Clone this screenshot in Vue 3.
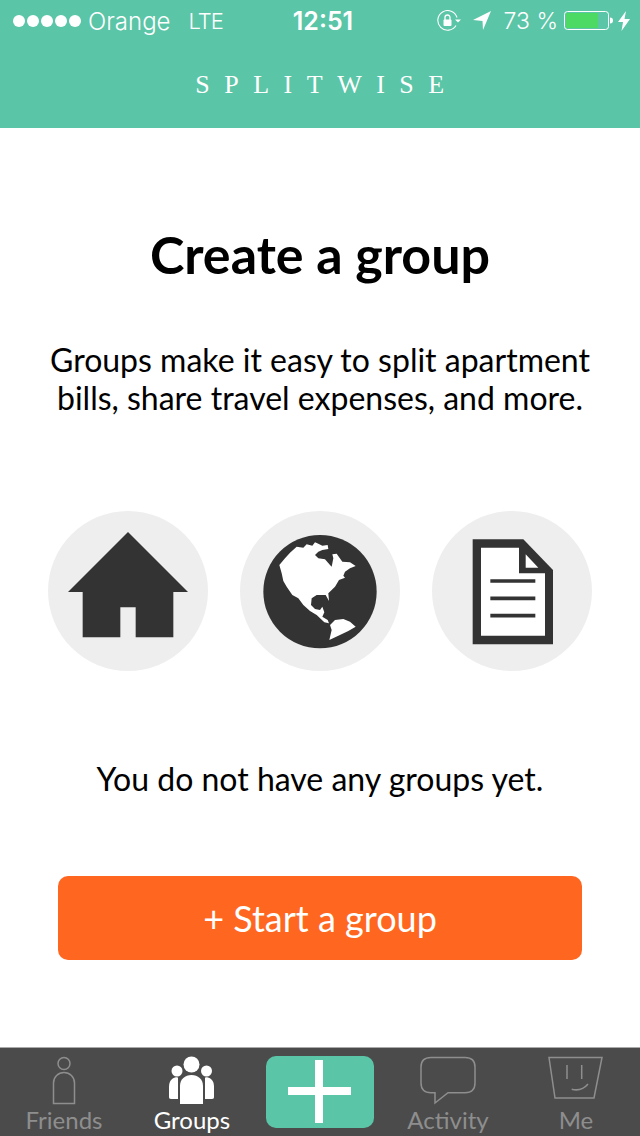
<script setup>
const dots = [1, 2, 3, 4, 5]
</script>

<template>
  <div class="page">
    <header class="top">
      <div class="status">
        <div class="status-left">
          <span class="dots"><i v-for="d in dots" :key="d"></i></span>
          <span class="carrier">Orange</span>
          <span class="net">LTE</span>
        </div>
        <div class="clock">12:51</div>
        <div class="status-right">
          <svg class="lock" width="24" height="22" viewBox="0 0 24 22">
            <path d="M19 15.500A9.800 9.800 0 1 1 20 7.500" fill="none" stroke="#fff" stroke-width="1.100"/>
            <path d="M18 9.500h6l-3 3z" fill="#fff"/>
            <rect x="6.500" y="9.500" width="8" height="6.500" rx="1" fill="#fff"/>
            <path d="M8 10V7.500a2.500 2.500 0 0 1 5 0V10" fill="none" stroke="#fff" stroke-width="1.300"/>
          </svg>
          <svg class="arrow" width="18" height="20" viewBox="0 0 18 20">
            <path d="M0 9L18 0L10 19L9.500 10z" fill="#fff"/>
          </svg>
          <span class="pct">73 %</span>
          <svg class="battery" width="50" height="20" viewBox="0 0 50 20">
            <rect x=".5" y=".5" width="44" height="18" rx="3" fill="none" stroke="#fff"/>
            <rect x="2" y="2" width="32" height="15" rx="1" fill="#4cd964"/>
            <path d="M46 6.500c2 0 3 1 3 3s-1 3-3 3z" fill="#fff"/>
          </svg>
          <svg class="bolt" width="12" height="20" viewBox="0 0 12 20">
            <path d="M8 0L0 11h5L3.500 20L12 8H6.500z" fill="#fff"/>
          </svg>
        </div>
      </div>
      <div class="brand">SPLITWISE</div>
    </header>

    <main class="main">
      <h1 class="title">Create a group</h1>
      <p class="lead">Groups make it easy to split apartment<br>bills, share travel expenses, and more.</p>

      <div class="icons">
        <div class="disc">
          <svg width="160" height="160" viewBox="24 33 480 480">
            <path fill="#333" d="M264 96L444 276H400V412H287V322H241V412H128V276H84Z"/>
          </svg>
        </div>
        <div class="disc">
          <svg width="160" height="160" viewBox="15 18 480 480">
            <circle cx="255" cy="260" r="170" fill="#333"/>
            <path fill="#fff" d="M133 180L150 160L165 143L185 125L205 128L215 118L232 122L240 112L250 116L262 122L278 120L280 132L262 135L250 140L240 150L250 160L270 163L285 180L290 185L295 160L292 148L305 146L322 170L345 172L362 183L345 190L330 200L325 212L330 218L312 225L300 245L290 255L280 265L282 288L272 270L245 270L230 280L228 300L240 312L255 315L262 305L268 322L262 335L278 345L282 355L268 352L245 330L225 318L205 300L190 280L172 270L155 245L145 228L140 205Z"/>
            <path fill="#fff" d="M283 405L290 375L285 360L300 345L325 342L345 350L362 365L340 378L310 392Z"/>
          </svg>
        </div>
        <div class="disc">
          <svg width="160" height="160" viewBox="21 18 480 480">
            <path fill="#333" d="M143 103H295L384 195V418H143Z"/>
            <path fill="#fff" d="M168 128H282V205H360V392H168Z"/>
            <path fill="#fff" d="M302 148L340 188H302Z"/>
            <path fill="none" stroke="#333" stroke-width="11" d="M196 228H331M196 280H331M196 332H331"/>
          </svg>
        </div>
      </div>

      <p class="empty">You do not have any groups yet.</p>
      <button class="start" type="button">+ Start a group</button>
    </main>

    <nav class="tabs">
      <div class="tab">
        <svg width="40" height="56" viewBox="0 0 40 56">
          <circle cx="20" cy="7.500" r="6" fill="none" stroke="#8e8e8e" stroke-width="1.500"/>
          <path d="M9.500 47.500V27a10.500 10.500 0 0 1 21 0V47.500Z" fill="none" stroke="#8e8e8e" stroke-width="1.500"/>
        </svg>
        <span>Friends</span>
      </div>
      <div class="tab active">
        <svg width="50" height="56" viewBox="0 0 50 56">
          <circle cx="24.500" cy="8.500" r="8" fill="#fff"/>
          <circle cx="10" cy="15" r="5.500" fill="#fff"/>
          <circle cx="39.500" cy="15" r="5.500" fill="#fff"/>
          <path d="M13 48V30c0-7 5-11 11.500-11S36 23 36 30V48Z" fill="#fff"/>
          <path d="M8 21.500C10 21 11 21.500 11 22C11 25 11 28 11 43H4C2.500 43 2 42 2 41V31C2 26 4 22.500 8 21.500Z" fill="#fff"/>
          <path d="M41 21.500C39 21 38 21.500 38 22C38 25 38 28 38 43H45C46.500 43 47 42 47 41V31C47 26 45 22.500 41 21.500Z" fill="#fff"/>
        </svg>
        <span>Groups</span>
      </div>
      <div class="tab">
        <div class="add">
          <svg width="64" height="64" viewBox="0 0 64 64">
            <path d="M0 31H63M31 0V63" stroke="#fff" stroke-width="8"/>
          </svg>
        </div>
      </div>
      <div class="tab">
        <svg width="56" height="56" viewBox="0 0 56 56">
          <path d="M11 1.500H45Q55 1.500 55 11V27Q55 36.700 45 36.700H28L15 47V36.700H11Q1 36.700 1 27V11Q1 1.500 11 1.500Z" fill="none" stroke="#8e8e8e" stroke-width="1.500"/>
        </svg>
        <span>Activity</span>
      </div>
      <div class="tab">
        <svg width="56" height="56" viewBox="0 0 56 56">
          <path d="M1 1.500H54L46 42H7Z" fill="none" stroke="#8e8e8e" stroke-width="1.500"/>
          <path d="M19 9V23M33.700 9V23M23.700 33.300Q33.700 35.700 40 28" fill="none" stroke="#8e8e8e" stroke-width="1.500"/>
        </svg>
        <span>Me</span>
      </div>
    </nav>
  </div>
</template>

<style scoped>
.page {
  width: 640px;
  height: 1136px;
  display: flex;
  flex-direction: column;
  background: #fff;
  font-family: Lato, "Open Sans", sans-serif;
  color: #000;
  overflow: hidden;
}
.top {
  height: 128px;
  background: #5bc5a7;
  color: #fff;
  display: flex;
  flex-direction: column;
}
.status {
  height: 42px;
  padding: 0 10px 0 13px;
  display: grid;
  grid-template-columns: 1fr auto 1fr;
  align-items: center;
  font-family: Inter, "Open Sans", sans-serif;
  font-size: 24px;
}
.status-left, .status-right { display: flex; align-items: center; }
.status-right { justify-content: flex-end; }
.dots { display: flex; gap: 2px; margin-right: 7px; }
.dots i { width: 12px; height: 12px; border-radius: 50%; background: #fff; display: block; }
.carrier { margin-right: 18px; font-weight: 300; }
.net { font-weight: 300; font-size: 22px; letter-spacing: -1px; }
.clock { font-weight: 600; font-size: 25px; margin-left: 3px; }
.lock { margin-right: 12px; }
.arrow { margin-right: 13px; }
.pct { margin-right: 6px; font-weight: 300; font-size: 23px; }
.battery { margin-right: 4px; }
.brand {
  font-family: "Liberation Serif", serif;
  font-size: 26px;
  line-height: 30px;
  letter-spacing: 14.500px;
  text-align: center;
  margin-top: 28px;
  padding-left: 14px;
}
.main {
  flex: 1;
  display: flex;
  flex-direction: column;
  align-items: center;
  min-height: 0;
}
.title {
  margin: 96px 0 0;
  font-size: 52px;
  line-height: 60px;
  font-weight: 700;
}
.lead {
  margin: 57px 0 0;
  font-size: 32px;
  line-height: 38px;
  text-align: center;
}
.icons {
  margin-top: 94px;
  display: flex;
  gap: 32px;
}
.disc {
  width: 160px;
  height: 160px;
  border-radius: 50%;
  background: #eee;
}
.disc svg { display: block; }
.empty {
  margin: 89px 0 0;
  font-size: 32px;
  line-height: 38px;
}
.start {
  margin-top: 78px;
  width: 524px;
  height: 84px;
  border: 0;
  border-radius: 10px;
  background: #ff6720;
  color: #fff;
  font-family: inherit;
  font-size: 36px;
}
.tabs {
  height: 89px;
  background: #4b4b4b;
  border-top: 1px solid #aaa;
  display: grid;
  grid-template-columns: repeat(5, 128px);
  box-sizing: border-box;
}
.tab {
  display: flex;
  flex-direction: column;
  align-items: center;
  padding-top: 8px;
  color: #8e8e8e;
  font-size: 24px;
  line-height: 28px;
  min-height: 0;
}
.tab svg { display: block; flex: none; }
.tab span { margin-top: -6px; }
.tab.active { color: #fff; }
.add {
  width: 108px;
  height: 72px;
  border-radius: 10px;
  background: #5bc5a7;
  display: flex;
  align-items: center;
  justify-content: center;
}
</style>
